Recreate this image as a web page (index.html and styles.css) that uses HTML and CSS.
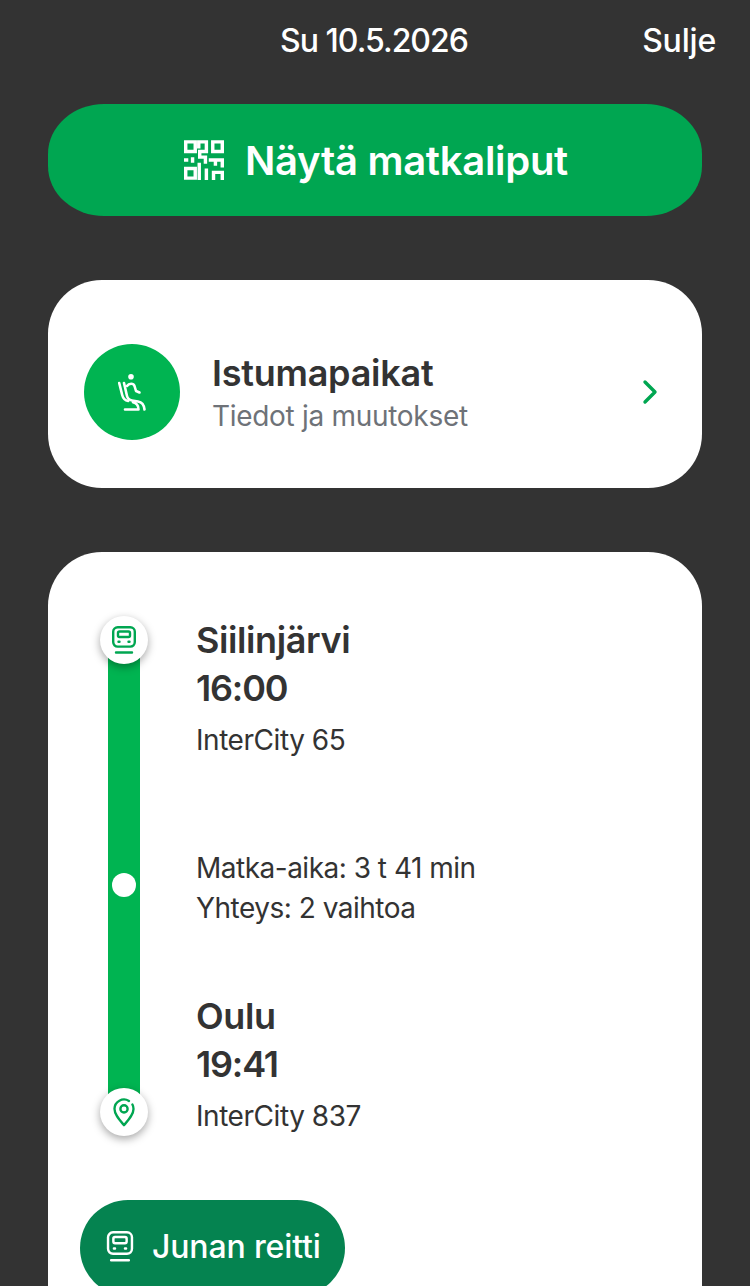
FILE: index.html
```html
<!DOCTYPE html>
<html lang="fi">
<head>
<meta charset="utf-8">
<title>Matka</title>
<link rel="stylesheet" href="styles.css">
</head>
<body>
<div class="page">
  <header class="top">
    <span class="date">Su 10.5.2026</span>
    <span class="close">Sulje</span>
  </header>
  <a class="ticket-btn">
    <svg class="qr" viewBox="0 0 42 42" fill="none" stroke="#fff" stroke-width="3.6">
      <path d="M1.800 2h10v10h-10zM30.200 2h10v10h-10zM1.800 30h10v10h-10z"/>
      <path d="M15.500 9V2h8v10h-7v6h6v7M0 21h4.500M9 18v6M16 24v18M26 21h14.200v8M33 21v6M23.500 30v12M31 42v-8h9.200v8"/>
    </svg>
    <span>Näytä matkaliput</span>
  </a>
  <section class="seat-card">
    <span class="seat-icon">
      <svg viewBox="0 0 28 37" fill="none" stroke="#fff" stroke-width="2.600" stroke-linecap="round" stroke-linejoin="round">
        <circle cx="13" cy="2.800" r="2.800" fill="#fff" stroke="none"/>
        <path d="M1.200 9l3 12c1 4 3 5.500 6 6"/>
        <path d="M6 9l3 13c.7 3 2 4 5 4.500l6 1c3.500.6 6 3 6.500 8"/>
        <path d="M9 12c2-3 6.500-3 7.500 0l1.500 5 3.500 1.500"/>
        <path d="M7 35.500h13.500c0-4-2-6.500-5.500-7.300"/>
      </svg>
    </span>
    <div class="seat-text">
      <div class="seat-title">Istumapaikat</div>
      <div class="seat-sub">Tiedot ja muutokset</div>
    </div>
    <svg class="chev" viewBox="0 0 16 26" fill="none" stroke="#00a651" stroke-width="3.400" stroke-linecap="round" stroke-linejoin="round"><path d="M3 3l10 10L3 23"/></svg>
  </section>
  <section class="trip-card">
    <div class="trip">
      <div class="rail">
        <span class="node">
          <svg class="node-icon" viewBox="0 0 24 28" fill="none" stroke="#00a651" stroke-width="2.400" stroke-linecap="round" stroke-linejoin="round">
            <rect x="1.200" y="1.200" width="21.600" height="19.400" rx="4.500"/>
            <rect x="6" y="5.500" width="12" height="5.500" rx="1.500"/>
            <path d="M6.500 15.800h1M16.500 15.800h1M4 26.500h16"/>
          </svg>
        </span>
        <span class="dot"></span>
        <span class="node">
          <svg class="pin-icon" viewBox="0 0 24 32" fill="none" stroke="#00a651" stroke-width="2.600" stroke-linecap="round" stroke-linejoin="round">
            <path d="M17.500 3.200A10.500 10.500 0 0 0 1.500 12c0 6 5 11.500 10.500 18 5.500-6.500 10.500-12 10.500-18 0-1.800-.4-3.300-1.200-4.800"/>
            <circle cx="12" cy="12" r="4"/>
          </svg>
        </span>
      </div>
      <div class="stops">
        <div class="stop">
          <div class="place">Siilinjärvi</div>
          <div class="time">16:00</div>
          <div class="train">InterCity 65</div>
        </div>
        <div class="meta">
          <div>Matka-aika: 3 t 41 min</div>
          <div>Yhteys: 2 vaihtoa</div>
        </div>
        <div class="stop">
          <div class="place">Oulu</div>
          <div class="time">19:41</div>
          <div class="train">InterCity 837</div>
        </div>
      </div>
    </div>
    <a class="route-btn">
      <svg class="route-icon" viewBox="0 0 24 28" fill="none" stroke="#fff" stroke-width="2.200" stroke-linecap="round" stroke-linejoin="round">
        <rect x="1.200" y="1.200" width="21.600" height="19.400" rx="4.500"/>
        <rect x="6" y="5.500" width="12" height="5.500" rx="1.500"/>
        <path d="M6.500 15.800h1M16.500 15.800h1M4 26.500h16"/>
      </svg>
      <span>Junan reitti</span>
    </a>
  </section>
</div>
</body>
</html>
```
FILE: styles.css
```css
* { box-sizing: border-box; }
html, body { margin: 0; padding: 0; height: 100%; overflow: hidden; }
body { background: #333333; font-family: Inter, "Liberation Sans", sans-serif; color: #333333; }
.page { height: 1286px; overflow: hidden; padding: 0 48px; }
.top { height: 80px; margin: 0 -14px 0 0; position: relative; display: flex; align-items: center; justify-content: flex-end; color: #fff; font-size: 32px; font-weight: 500; }
.date { position: absolute; left: 0; right: 16px; text-align: center; letter-spacing: -1px; }
.close { letter-spacing: -0.2px; }
.ticket-btn { margin-top: 24px; height: 112px; background: #00a651; border-radius: 56px / 50px; display: flex; align-items: center; justify-content: center; gap: 21px; padding-left: 2px; color: #fff; font-size: 40px; font-weight: 600; letter-spacing: -0.3px; }
.qr { width: 40px; height: 40px; }
.seat-card { margin-top: 64px; height: 208px; background: #fff; border-radius: 54px; display: flex; align-items: center; padding: 16px 36px 0; }
.seat-icon { width: 96px; height: 96px; border-radius: 50%; background: #00b451; display: flex; align-items: center; justify-content: center; flex: none; }
.seat-icon svg { width: 28px; height: 37px; }
.seat-text { margin-left: 32px; flex: 1; padding-top: 3px; }
.seat-title { font-size: 36px; font-weight: 600; line-height: 44px; letter-spacing: -0.25px; }
.seat-sub { font-size: 28px; line-height: 40px; margin-top: 1px; letter-spacing: -0.3px; color: #6e7278; }
.chev { width: 16px; height: 26px; margin-right: 8px; }
.trip-card { margin-top: 64px; background: #fff; border-radius: 54px; padding: 64px 32px 0; height: 800px; }
.trip { display: flex; height: 520px; }
.rail { position: relative; width: 48px; margin-left: 20px; display: flex; flex-direction: column; align-items: center; justify-content: space-between; }
.rail::before { content: ""; position: absolute; top: 24px; bottom: 24px; left: 8px; width: 32px; background: #00b451; }
.node { position: relative; width: 48px; height: 48px; border-radius: 50%; background: #fff; box-shadow: 0 3px 9px rgba(0,0,0,.35); display: flex; align-items: center; justify-content: center; }
.node-icon { width: 24px; height: 28px; }
.pin-icon { width: 22px; height: 29px; }
.dot { position: relative; width: 24px; height: 24px; margin-top: 18px; border-radius: 50%; background: #fff; }
.stops { margin-left: 48px; display: flex; flex-direction: column; }
.stop { flex: none; height: 152px; }
.place { font-size: 36px; font-weight: 600; line-height: 48px; letter-spacing: -0.4px; }
.time { font-size: 36px; font-weight: 600; line-height: 48px; letter-spacing: -1.2px; }
.train { font-size: 28px; line-height: 56px; letter-spacing: -0.45px; }
.meta { flex: none; margin-top: 80px; height: 144px; font-size: 28px; line-height: 40px; letter-spacing: -0.5px; }
.route-btn { margin-top: 64px; width: 265px; height: 96px; border-radius: 48px; background: #058350; color: #fff; display: flex; align-items: center; padding: 0 0 4px 26px; gap: 18px; font-size: 32px; font-weight: 500; letter-spacing: -0.15px; }
.route-icon { width: 28px; height: 31px; }
```
